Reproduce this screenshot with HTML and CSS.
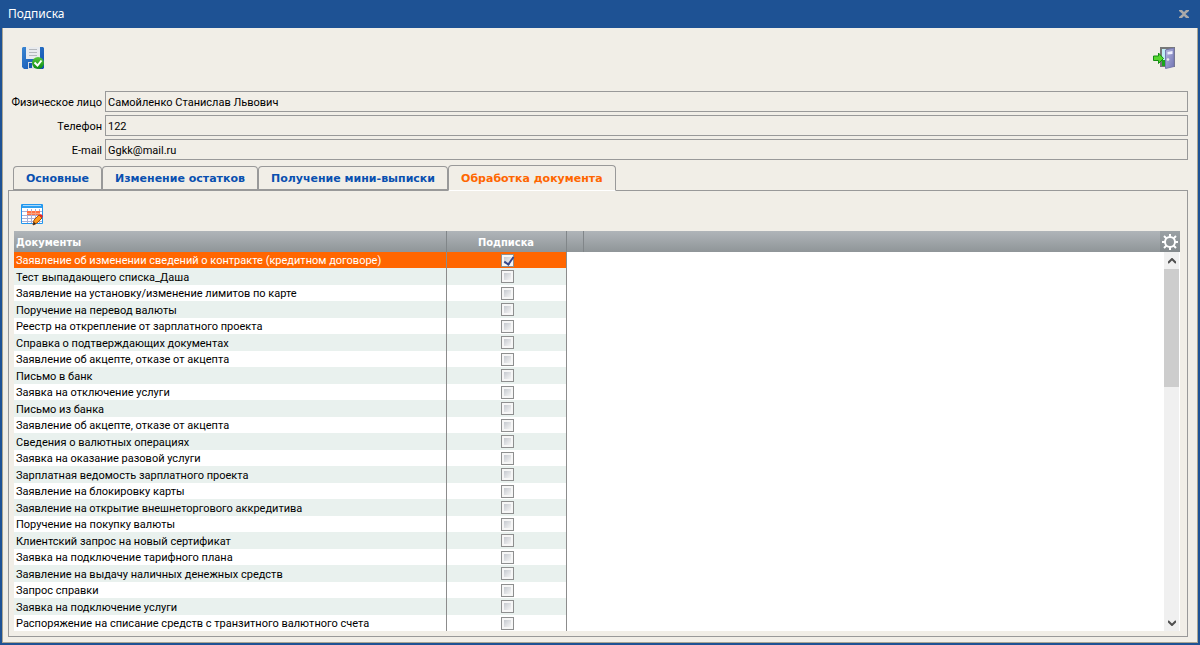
FILE: index.html
```html
<!DOCTYPE html>
<html lang="ru">
<head>
<meta charset="utf-8">
<title>Подписка</title>
<link rel="stylesheet" href="styles.css">
</head>
<body>
<main class="window">
  <header class="titlebar"><span class="title">Подписка</span>
    <button class="close" aria-label="Закрыть"><svg width="10" height="8" viewBox="0 0 10 8"><path d="M0 0h3l2 2 2-2h3v1L6.500 4 10 7v1H7L5 6 3 8H0V7l3.500-3L0 1z" fill="#a9a9a9"/></svg></button>
  </header>
  <div class="content">
    <div class="toolbar">
      <button class="icon" aria-label="Сохранить"><svg width="22" height="22" viewBox="0 0 22 22">
        <defs><linearGradient id="disk" x2="1" y2="1"><stop stop-color="#3b86d2"/><stop offset="1" stop-color="#0c4cad"/></linearGradient>
        <linearGradient id="ok" x2="0" y2="1"><stop stop-color="#58c83c"/><stop offset="1" stop-color="#0b8a12"/></linearGradient></defs>
        <path d="M1 0h20l1 1v20l-1 1H2l-2-2V1z" fill="url(#disk)"/>
        <path d="M4 0h14v12H4z" fill="#e9ebee"/><path d="M7 2.500h8M7 5.500h8M7 8.500h8" stroke="#b5b8bd"/>
        <path d="M6 15h11v7H6z" fill="#d9dde3"/><path d="M7 16h3v5H7z" fill="#1759ae"/>
        <circle cx="16" cy="16" r="6" fill="url(#ok)"/><path d="M12.500 15.500l3 3 4-5" fill="none" stroke="#fff" stroke-width="2"/>
      </svg></button>
      <button class="icon" aria-label="Выход"><svg width="24" height="22" viewBox="0 0 24 22">
        <defs><linearGradient id="door" x2="1" y2="1"><stop stop-color="#b6b7e0"/><stop offset="1" stop-color="#7375b4"/></linearGradient></defs>
        <path d="M7 0h15v20H7z" fill="#777"/><path d="M9 2h4v17H9z" fill="#bfeef5"/><path d="M9 13h4v6H9z" fill="#19a51c"/>
        <path d="M12.500 3L21 1v18.500l-8.500 2z" fill="url(#door)" stroke="#7779b0"/><path d="M14.500 5l5-1v3l-5 .5z" fill="#eef"/>
        <circle cx="15" cy="12.500" r="1.300" fill="#eee"/>
        <path d="M.5 9h5V6l5 5.500-5 5v-3h-5z" fill="#55d62d" stroke="#148d12"/>
      </svg></button>
    </div>
    <form class="fields">
      <label for="person">Физическое лицо</label><input id="person" value="Самойленко Станислав Львович" readonly>
      <label for="phone">Телефон</label><input id="phone" value="122" readonly>
      <label for="email">E-mail</label><input id="email" value="Ggkk@mail.ru" readonly>
    </form>
    <nav class="tabs" role="tablist">
      <button class="tab" role="tab">Основные</button>
      <button class="tab" role="tab">Изменение остатков</button>
      <button class="tab" role="tab">Получение мини-выписки</button>
      <button class="tab active" role="tab" aria-selected="true">Обработка документа</button>
    </nav>
    <section class="panel">
      <button class="icon" aria-label="Редактировать"><svg width="22" height="22" viewBox="0 0 22 22">
        <path d="M.5.500h21v19H.5z" fill="#fff" stroke="#2196ee"/><path d="M1 1h20v3H1z" fill="#2d9ef0"/><path d="M2 1.500h18" stroke="#a9d8fb"/>
        <path d="M1 7.500h20M1 11.500h20M1 14.500h20M1 17.500h20M6.500 5v14M10.500 5v14M14.500 5v14M18.500 5v14" stroke="#aaaed4"/>
        <path d="M6 7h13v4H6z" fill="#ff7042"/><path d="M6 9.500h13M10.500 7v4M14.500 7v4" stroke="#f8a17f"/>
        <path d="M12 21l1-5 5-5 3 3-5 5z" fill="#ff9b1d" stroke="#a84e0c"/><path d="M18 11l3 3 1-2-2-2z" fill="#e3242c"/><path d="M12 21l1-3 2 2z" fill="#222"/>
      </svg></button>
      <div class="grid">
        <table>
          <colgroup><col class="c-doc"><col class="c-sub"><col class="c-gap"><col><col class="c-gear"></colgroup>
          <thead><tr><th class="left">Документы</th><th>Подписка</th><th></th><th></th><th class="gear"><button class="settings" aria-label="Настройки"><svg width="16" height="16" viewBox="0 0 16 16"><circle cx="8" cy="8" r="5" fill="none" stroke="#fff" stroke-width="2"/><path d="M8 0v3M8 13v3M0 8h3M13 8h3M2 2l2.500 2.500M11.500 11.500L14 14M2 14l2.500-2.500M11.500 4.500L14 2" stroke="#fff" stroke-width="2"/></svg></button></th></tr></thead>
          <tbody id="rows"></tbody>
        </table>
        <div class="scroll" aria-hidden="true">
          <svg width="8" height="6" viewBox="0 0 8 6"><path d="M0 5l4-4 4 4" fill="none" stroke="#505050" stroke-width="2"/></svg>
          <div class="track"><div class="thumb"></div></div>
          <svg width="8" height="6" viewBox="0 0 8 6"><path d="M0 1l4 4 4-4" fill="none" stroke="#505050" stroke-width="2"/></svg>
        </div>
      </div>
    </section>
  </div>
</main>
<script src="rows.js"></script>
</body>
</html>
```
FILE: styles.css
```css
* { box-sizing: border-box; }
body { margin: 0; font: 11px/13px Roboto, Tahoma, sans-serif; color: #000; }
button { font: inherit; border: 0; padding: 0; background: none; }
svg { display: block; }
.window { min-height: 100vh; display: flex; flex-direction: column; background: #1e5294; padding: 0 2px 2px; }
.titlebar { height: 28px; display: flex; justify-content: space-between; align-items: center; padding: 0 9px 0 6px; color: #fff; font: 12px/16px "Noto Sans", Tahoma, sans-serif; }
.content { flex: 1; display: flex; flex-direction: column; background: #f1eee7; border: 1px solid #aaa593; border-top: 0; padding: 19px 9px 5px 5px; }
.toolbar { display: flex; justify-content: space-between; padding: 0 11px 0 14px; margin-bottom: 22px; }
.fields { display: grid; grid-template-columns: 94px 1fr; gap: 3px; align-items: center; }
.fields label { text-align: right; white-space: nowrap; justify-self: end; padding-top: 1px; }
.fields input { height: 21px; width: 100%; min-width: 0; font: inherit; color: inherit; background: transparent; border: 1px solid #999; border-radius: 0; padding: 1px 2px 0; outline: 0; }
.tabs { display: flex; align-items: flex-end; margin: 5px 0 -1px 5px; position: relative; }
.tab { height: 25px; padding: 2px 12px 0; border: 1px solid #999; border-bottom-width: 2px; border-radius: 4px 4px 0 0; color: #0a50b0; font: bold 11px/14px "DejaVu Sans", Verdana, sans-serif; white-space: nowrap; }
.tab.active { height: 26px; background: #f1eee7; color: #ff6600; border-bottom: 1px solid #fff; }
.panel { flex: 1; display: flex; flex-direction: column; align-items: flex-start; border: 1px solid #999; padding: 13px 7px 5px 5px; }
.panel > .icon { margin: 0 0 5px 7px; }
.grid { flex: 1; width: 100%; position: relative; background: #fff; }
table { width: 100%; table-layout: fixed; border-collapse: collapse; }
.c-doc { width: 432px; }
.c-sub { width: 120px; }
.c-gap { width: 17px; }
.c-gear { width: 20px; }
thead tr { height: 21px; background: linear-gradient(#b0b5b9, #8f9598); }
th { padding: 2px 0 0; border-right: 1px solid #818689; color: #fff; font: bold 11px/14px "DejaVu Sans Condensed", Tahoma, sans-serif; }
th:nth-child(n+4) { border-right: 0; }
th.left { text-align: left; padding-left: 2px; }
.gear { background: linear-gradient(#9ba1a5, #83898c); padding: 0; }
.settings { display: block; margin: 0 auto; }
tbody tr { height: 16px; }
tbody tr:nth-child(even) { height: 17px; }
td { padding: 1px 2px 0; border-right: 1px solid #8c8c8c; line-height: 15px; white-space: nowrap; text-align: center; }
td.name { text-align: left; }
tr:nth-child(even) td { background: #e9f1ee; }
tr.selected td { background: #ff6600; color: #fff; }
.check { appearance: none; display: block; width: 13px; height: 13px; margin: 0 auto; border: 1px solid #8e8f8f; background: linear-gradient(135deg, #c5c9cf, #f5f5f5) content-box, #f6f6f6; padding: 2px; }
td:last-child { padding: 0 2px 0 4px; }
.check:checked::before { content: ""; display: block; width: 4px; height: 8px; margin: -2px 0 0 2px; border: solid #35478c; border-width: 0 2px 2px 0; transform: rotate(35deg); }
.scroll { position: absolute; top: 21px; right: 1px; bottom: 0; width: 15px; background: #f0f0f0; display: flex; flex-direction: column; align-items: center; padding: 6px 0 5px; }
.track { flex: 1; width: 100%; margin: 5px 0; }
.thumb { height: 34%; background: #cdcdcd; }
```
FILE: rows.js
```js
const names = [
  "Заявление об изменении сведений о контракте (кредитном договоре)",
  "Тест выпадающего списка_Даша",
  "Заявление на установку/изменение лимитов по карте",
  "Поручение на перевод валюты",
  "Реестр на открепление от зарплатного проекта",
  "Справка о подтверждающих документах",
  "Заявление об акцепте, отказе от акцепта",
  "Письмо в банк",
  "Заявка на отключение услуги",
  "Письмо из банка",
  "Заявление об акцепте, отказе от акцепта",
  "Сведения о валютных операциях",
  "Заявка на оказание разовой услуги",
  "Зарплатная ведомость зарплатного проекта",
  "Заявление на блокировку карты",
  "Заявление на открытие внешнеторгового аккредитива",
  "Поручение на покупку валюты",
  "Клиентский запрос на новый сертификат",
  "Заявка на подключение тарифного плана",
  "Заявление на выдачу наличных денежных средств",
  "Запрос справки",
  "Заявка на подключение услуги",
  "Распоряжение на списание средств с транзитного валютного счета"
];
document.getElementById("rows").innerHTML = names.map((name, i) =>
  `<tr${i === 0 ? ' class="selected"' : ""}><td class="name"><label for="doc${i}">${name}</label></td><td><input class="check" type="checkbox" id="doc${i}"${i === 0 ? " checked" : ""}></td></tr>`
).join("");
```
